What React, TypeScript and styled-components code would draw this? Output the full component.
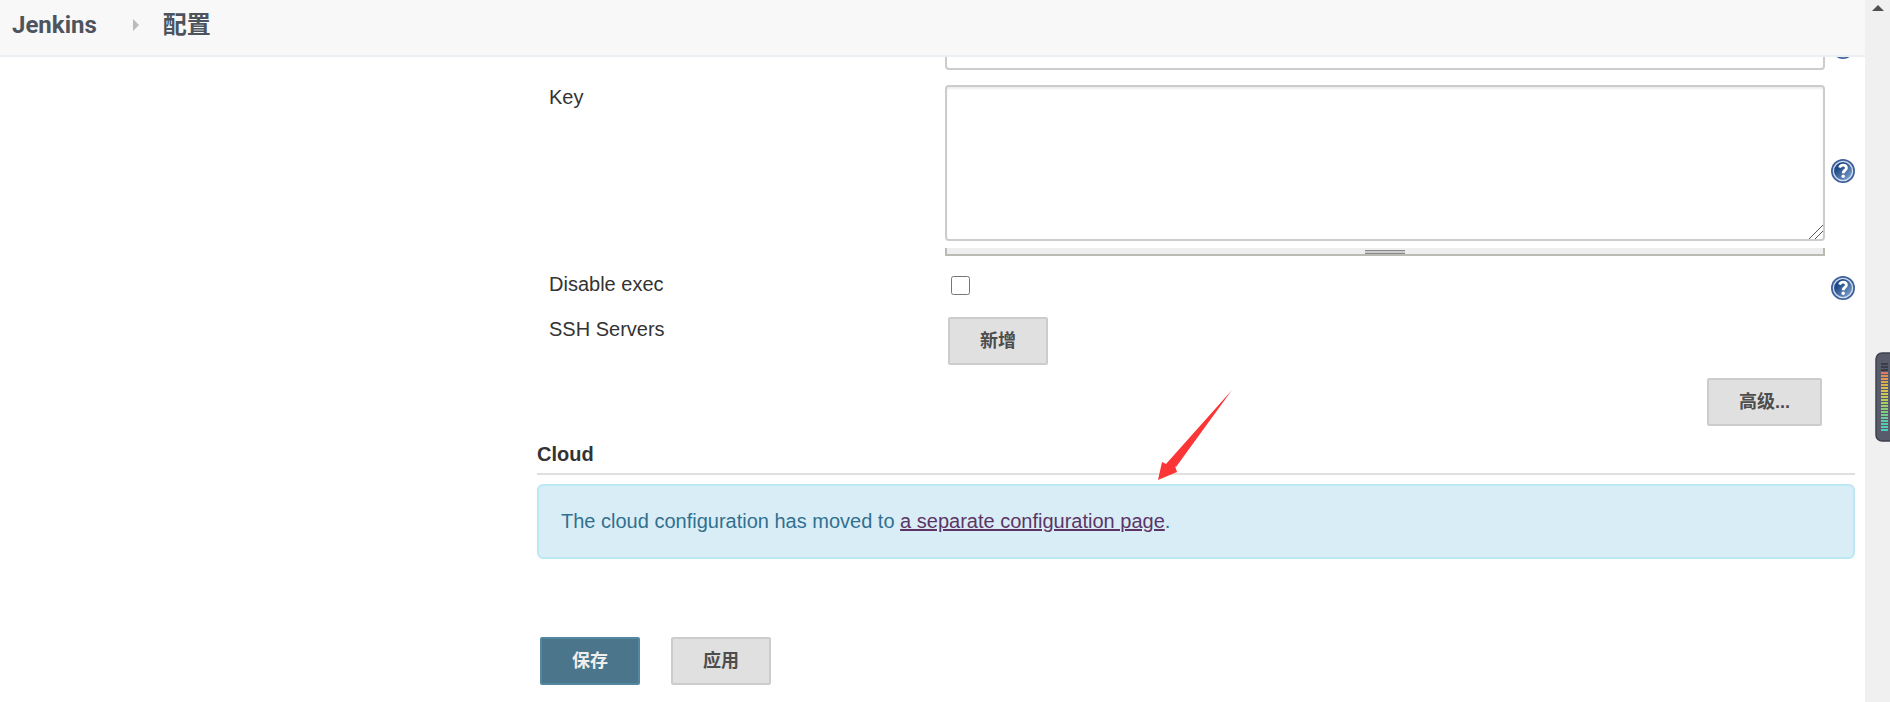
import React from 'react';
import styled, { createGlobalStyle } from 'styled-components';

const GlobalStyle = createGlobalStyle`
  *, *::before, *::after { box-sizing: border-box; }
  html, body { margin: 0; height: 100%; }
  body {
    overflow: hidden;
    background: #fff;
    color: #333;
    font-family: "Liberation Sans", Arial, "Noto Sans CJK SC", sans-serif;
    font-size: 20px;
    line-height: 24px;
  }
`;

const Shell = styled.div`
  display: grid;
  grid-template-columns: minmax(0, 1fr) 25px;
  height: 100vh;
`;

const Page = styled.div`
  display: flex;
  flex-direction: column;
  min-width: 0;
  overflow: hidden;
`;

const Header = styled.header`
  flex: none;
  height: 57px;
  padding: 0 12px 6px;
  background: #f8f8f8;
  border-bottom: 2px solid #e9eff2;
`;

const Crumbs = styled.nav`
  display: flex;
  align-items: center;
  height: 100%;
`;

const Crumb = styled.a`
  color: #4d545d;
  font: bold 24px/32px Roboto, "Noto Sans CJK SC", sans-serif;
  text-decoration: none;
`;

const Caret = styled.svg`
  width: 6px;
  height: 12px;
  margin: 0 24px 0 36px;
`;

const Columns = styled.div`
  display: grid;
  grid-template-columns: 537px minmax(0, 1fr);
  flex: 1;
  min-height: 0;
  overflow: hidden;
`;

const Form = styled.form`
  grid-column: 2;
  padding-right: 10px;
`;

const Row = styled.div<{ $gap?: number; $align?: string }>`
  display: grid;
  grid-template-columns: 396px minmax(0, 1fr) 24px;
  column-gap: 6px;
  align-items: ${(p) => p.$align ?? 'start'};
  margin-top: ${(p) => p.$gap ?? 0}px;
  padding-left: 6px;
`;

const ClippedRow = styled(Row)`
  height: 13px;
`;

const Label = styled.label`
  align-self: start;
  padding-left: 6px;
`;

const Field = styled.div`
  display: flex;
  flex-direction: column;
  align-items: flex-start;
`;

const TextInput = styled.input`
  display: block;
  width: 100%;
  height: 42px;
  margin-top: -29px;
  padding: 6px;
  border: 2px solid #ccc;
  border-radius: 4px;
  font: inherit;
`;

const TextArea = styled.textarea`
  display: block;
  width: 100%;
  height: 156px;
  padding: 6px;
  border: 2px solid #ccc;
  border-radius: 4px;
  box-shadow: inset 0 2px 2px #eee;
  font: inherit;
  resize: both;

  &::-webkit-resizer {
    background: linear-gradient(
      135deg,
      transparent 11px,
      #555 11px 12px,
      transparent 12px 15px,
      #555 15px 16px,
      transparent 16px
    );
  }
`;

const Handle = styled.div`
  display: flex;
  justify-content: center;
  align-items: flex-end;
  width: 100%;
  height: 8px;
  margin-top: 7px;
  background: #eee;
  border: solid #bbbbb3;
  border-width: 0 2px 2px;
`;

const Grip = styled.span`
  width: 40px;
  height: 4px;
  background: #ccc;
  border: solid #888;
  border-width: 1px 0;
`;

const CheckBox = styled.input`
  width: 19px;
  height: 19px;
  margin: 4px 6px;
`;

const HelpButton = styled.button`
  width: 24px;
  height: 24px;
  padding: 0;
  border: 0;
  background: none;
  svg { display: block; }
`;

const ClippedHelp = styled.div`
  margin-top: -22px;
`;

const LowHelp = styled.div`
  padding-top: 4px;
`;

const Button = styled.button<{ $primary?: boolean }>`
  height: 48px;
  padding: 0 30px;
  border: 2px solid ${(p) => (p.$primary ? '#5387a0' : '#ccc')};
  border-radius: 2px;
  background: ${(p) => (p.$primary ? '#4b758b' : '#e0e0e0')};
  color: ${(p) => (p.$primary ? '#eee' : '#4d4d4d')};
  font: bold 18px/24px "Liberation Sans", "Noto Sans CJK SC", sans-serif;
`;

const ServersField = styled.div`
  padding-left: 3px;
`;

const Advanced = styled.div`
  display: flex;
  justify-content: flex-end;
  margin-top: 13px;
  padding-right: 33px;
`;

const SectionTitle = styled.h2`
  margin: 16px 0 9px;
  padding-bottom: 7px;
  border-bottom: 2px solid #e0e0e0;
  font-size: 20px;
  line-height: 24px;
`;

const NoticeArea = styled.div`
  position: relative;
`;

const Notice = styled.p`
  margin: 0;
  padding: 23px 22px;
  border: 2px solid #bce8f1;
  border-radius: 6px;
  background: #d9edf7;
  color: #31708f;
  line-height: 25px;
`;

const NoticeLink = styled.a`
  color: #5c3566;
  text-decoration: underline;
`;

const Arrow = styled.svg`
  position: absolute;
  left: 50%;
  top: -96px;
  margin-left: -38px;
`;

const Actions = styled.div`
  display: flex;
  gap: 31px;
  margin-top: 78px;
  padding-left: 3px;
`;

const ScrollTrack = styled.div`
  display: flex;
  justify-content: center;
  padding: 5px 0 0;
  background: #f0f0f0;
`;

const MeterWidget = styled.svg`
  position: fixed;
  top: 352px;
  right: 0;
`;

const HelpIcon = () => (
  <svg width="24" height="24" viewBox="0 0 24 24" aria-hidden="true">
    <defs>
      <linearGradient id="help" x1="0" y1="0" x2="1" y2="1">
        <stop offset="0.3" stopColor="#204a87" />
        <stop offset="1" stopColor="#8fb2dc" />
      </linearGradient>
    </defs>
    <circle cx="12" cy="12" r="12" fill="#3d629c" />
    <circle cx="12" cy="12" r="9.6" fill="url(#help)" stroke="#d3dfef" strokeWidth="1.3" />
    <path d="M8.7 8.6C9.5 5.2 15.6 5.4 15.4 9c-.1 2.4-3.2 2.6-3.2 5.2" fill="none" stroke="#fff" strokeWidth="2.9" />
    <circle cx="12.2" cy="17.2" r="1.7" fill="#fff" />
  </svg>
);

const Help = ({ topic }: { topic: string }) => (
  <HelpButton type="button" aria-label={`Help for ${topic}`}>
    <HelpIcon />
  </HelpButton>
);

const bars = [
  '#3a3d4a', '#3a3d4a', '#3a3d4a', '#e27a62', '#e28e5c', '#e09a58', '#dda653', '#dbb150',
  '#d8bb50', '#d6c352', '#cfc856', '#c3ca5c', '#b6cb62', '#a8cc68', '#9bcd70', '#8ecd78',
  '#80cd84', '#74cc8f', '#69cc9a', '#60cca6', '#58ccae', '#52ccb5', '#50ccba',
];

export default function App() {
  return (
    <>
      <GlobalStyle />
      <Shell>
        <Page>
          <Header>
            <Crumbs>
              <Crumb href="#">Jenkins</Crumb>
              <Caret viewBox="0 0 6 12" aria-hidden="true">
                <path d="M0 0L6 6L0 12Z" fill="#bbb" />
              </Caret>
              <Crumb href="#">配置</Crumb>
            </Crumbs>
          </Header>
          <Columns>
            <Form onSubmit={(e) => e.preventDefault()}>
              <ClippedRow>
                <span />
                <TextInput aria-label="Path to key" />
                <ClippedHelp><Help topic="Path to key" /></ClippedHelp>
              </ClippedRow>
              <Row $gap={15} $align="center">
                <Label htmlFor="key">Key</Label>
                <Field>
                  <TextArea id="key" />
                  <Handle><Grip /></Handle>
                </Field>
                <Help topic="Key" />
              </Row>
              <Row $gap={16}>
                <Label htmlFor="disable">Disable exec</Label>
                <Field><CheckBox id="disable" type="checkbox" /></Field>
                <LowHelp><Help topic="Disable exec" /></LowHelp>
              </Row>
              <Row $gap={12}>
                <Label as="span">SSH Servers</Label>
                <ServersField><Button type="button">新增</Button></ServersField>
              </Row>
              <Advanced><Button type="button">高级...</Button></Advanced>
              <SectionTitle>Cloud</SectionTitle>
              <NoticeArea>
                <Notice>
                  The cloud configuration has moved to{' '}
                  <NoticeLink href="#">a separate configuration page</NoticeLink>.
                </Notice>
                <Arrow width="76" height="94" viewBox="0 0 76 94" aria-hidden="true">
                  <path d="M74 2L18 79L17 78L19 84L0 92L4 74L8 76Z" fill="#fb3636" />
                </Arrow>
              </NoticeArea>
              <Actions>
                <Button $primary type="submit">保存</Button>
                <Button type="button">应用</Button>
              </Actions>
            </Form>
          </Columns>
        </Page>
        <ScrollTrack>
          <svg width="12" height="6" viewBox="0 0 12 6" aria-hidden="true">
            <path d="M0 6L6 0L12 6Z" fill="#505050" />
          </svg>
        </ScrollTrack>
      </Shell>
      <MeterWidget width="15" height="91" viewBox="0 0 15 91" aria-hidden="true">
        <rect x="1" y="1" width="24" height="88" rx="6" fill="#575b6a" stroke="#3f424e" strokeWidth="1.5" />
        {bars.map((fill, i) => (
          <rect key={i} x="6" y={11 + i * 3} width="7" height="2" fill={fill} />
        ))}
      </MeterWidget>
    </>
  );
}
